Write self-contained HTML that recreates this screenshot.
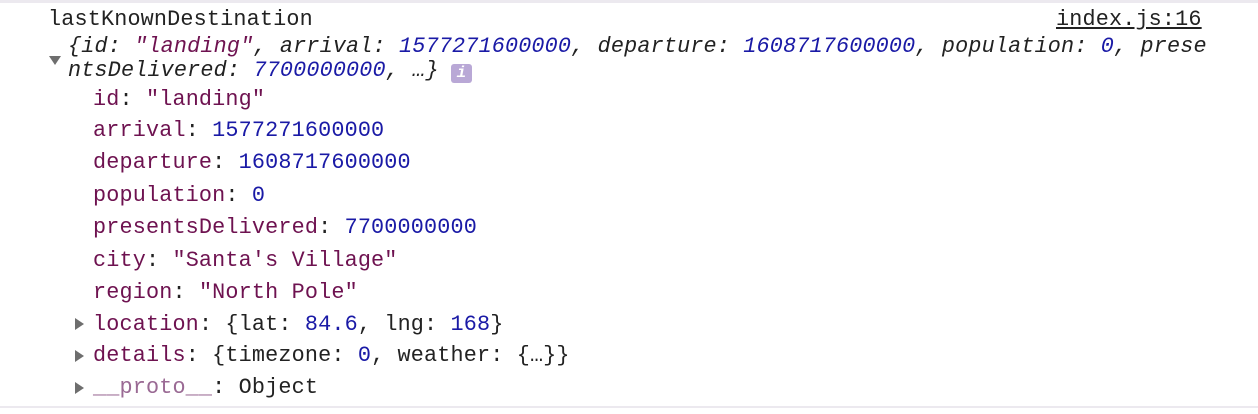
<!DOCTYPE html>
<html><head><meta charset="utf-8"><style>
body{margin:0;background:#fff;width:1258px;height:414px;overflow:hidden;font-family:"Liberation Mono","DejaVu Sans Mono",monospace;font-size:21.8px;letter-spacing:0.16px;color:#222;position:relative}
.top{position:absolute;left:0;top:0;width:1258px;height:3px;background:#ece9ef}
.bot{position:absolute;left:0;top:406px;width:1258px;height:2px;background:#ece9ef}
.l{position:absolute;white-space:pre;line-height:26px}
.k{color:#6e1250}.n{color:#1a1aa6}.str{color:#6e1250}
.p{color:#9a6a94}
.i{font-style:italic}
.tri{position:absolute;width:0;height:0}
.right{border-top:6px solid transparent;border-bottom:6px solid transparent;border-left:9px solid #6e6e6e}
.down{border-left:6px solid transparent;border-right:6px solid transparent;border-top:9px solid #6e6e6e}
.info{position:absolute;left:451px;top:64px;width:21px;height:19px;background:#b9a8d6;border-radius:3px;color:#fff;font-size:16px;text-align:center;line-height:19px;font-style:italic;font-weight:bold}
</style></head><body>
<div class="top"></div>
<div class="l" style="left:48px;top:7px">lastKnownDestination</div>
<div class="l" style="left:1056px;top:7px;text-decoration:underline">index.js:16</div>
<div class="l i" style="left:68px;top:34px">{id: <span class="str">"landing"</span>, arrival: <span class="n">1577271600000</span>, departure: <span class="n">1608717600000</span>, population: <span class="n">0</span>, prese</div>
<div class="l i" style="left:68px;top:58px">ntsDelivered: <span class="n">7700000000</span>, …}</div>
<div class="info">i</div>
<div class="tri down" style="left:49px;top:56px"></div>
<div class="l" style="left:93px;top:87px"><span class="k">id</span>: <span class="str">"landing"</span></div>
<div class="l" style="left:93px;top:118px"><span class="k">arrival</span>: <span class="n">1577271600000</span></div>
<div class="l" style="left:93px;top:150px"><span class="k">departure</span>: <span class="n">1608717600000</span></div>
<div class="l" style="left:93px;top:183px"><span class="k">population</span>: <span class="n">0</span></div>
<div class="l" style="left:93px;top:215px"><span class="k">presentsDelivered</span>: <span class="n">7700000000</span></div>
<div class="l" style="left:93px;top:248px"><span class="k">city</span>: <span class="str">"Santa's Village"</span></div>
<div class="l" style="left:93px;top:280px"><span class="k">region</span>: <span class="str">"North Pole"</span></div>
<div class="tri right" style="left:75px;top:318px"></div>
<div class="l" style="left:93px;top:312px"><span class="k">location</span>: {lat: <span class="n">84.6</span>, lng: <span class="n">168</span>}</div>
<div class="tri right" style="left:75px;top:350px"></div>
<div class="l" style="left:93px;top:343px"><span class="k">details</span>: {timezone: <span class="n">0</span>, weather: {…}}</div>
<div class="tri right" style="left:75px;top:382px"></div>
<div class="l" style="left:93px;top:375px"><span class="p">__proto__</span>: Object</div>
<div class="bot"></div>
</body></html>
